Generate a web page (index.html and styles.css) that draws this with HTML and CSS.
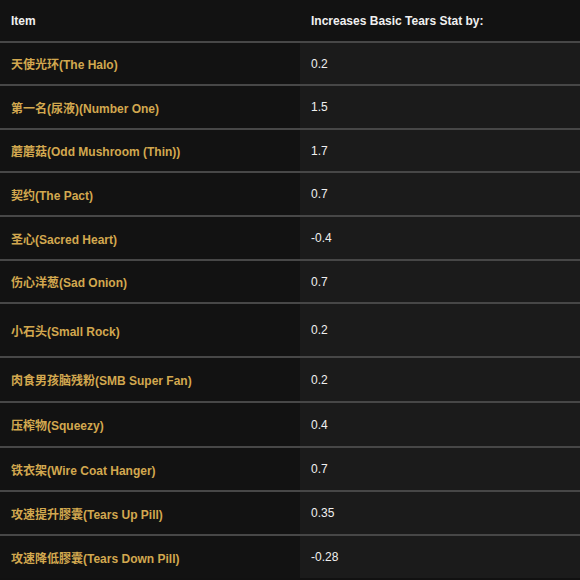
FILE: index.html
```html
<!DOCTYPE html>
<html>
<head>
<meta charset="utf-8">
<link rel="stylesheet" href="styles.css">
</head>
<body>
<table class="stats">
  <thead>
    <tr><th class="col-item">Item</th><th class="col-val">Increases Basic Tears Stat by:</th></tr>
  </thead>
  <tbody>
    <tr class="h41"><td class="name">天使光环(The Halo)</td><td class="val">0.2</td></tr>
    <tr class="h42"><td class="name">第一名(尿液)(Number One)</td><td class="val">1.5</td></tr>
    <tr class="h41"><td class="name">蘑蘑菇(Odd Mushroom (Thin))</td><td class="val">1.7</td></tr>
    <tr class="h42"><td class="name">契约(The Pact)</td><td class="val">0.7</td></tr>
    <tr class="h42"><td class="name">圣心(Sacred Heart)</td><td class="val">-0.4</td></tr>
    <tr class="h41"><td class="name">伤心洋葱(Sad Onion)</td><td class="val">0.7</td></tr>
    <tr class="h52"><td class="name">小石头(Small Rock)</td><td class="val">0.2</td></tr>
    <tr class="h43"><td class="name">肉食男孩脑残粉(SMB Super Fan)</td><td class="val">0.2</td></tr>
    <tr class="h43"><td class="name">压榨物(Squeezy)</td><td class="val">0.4</td></tr>
    <tr class="h42"><td class="name">铁衣架(Wire Coat Hanger)</td><td class="val">0.7</td></tr>
    <tr class="h42"><td class="name">攻速提升膠囊(Tears Up Pill)</td><td class="val">0.35</td></tr>
    <tr class="h42"><td class="name">攻速降低膠囊(Tears Down Pill)</td><td class="val">-0.28</td></tr>
  </tbody>
</table>
</body>
</html>
```

FILE: styles.css
```css
html, body {
  margin: 0;
  padding: 0;
  background: #111111;
}
body {
  font-family: "Liberation Sans", Arial, "Noto Sans CJK SC", sans-serif;
  font-size: 12px;
}
.stats {
  width: 580px;
  border-collapse: collapse;
  table-layout: fixed;
}
.col-item { width: 289px; }
.stats th {
  height: 41px;
  padding: 0 0 0 11px;
  text-align: left;
  font-weight: bold;
  color: #f0f0f0;
  background: #121212;
  vertical-align: middle;
}
.stats td {
  padding: 0 0 0 11px;
  border-top: 2px solid #474747;
  vertical-align: middle;
}
.stats tr.h41 td { height: 41px; }
.stats tr.h42 td { height: 42px; }
.stats tr.h43 td { height: 43px; }
.stats tr.h52 td { height: 52px; }
.name {
  background: #121212;
  color: #d2a84f;
  font-weight: bold;
}
.val {
  background: #1b1b1b;
  color: #f0f0f0;
}
```
